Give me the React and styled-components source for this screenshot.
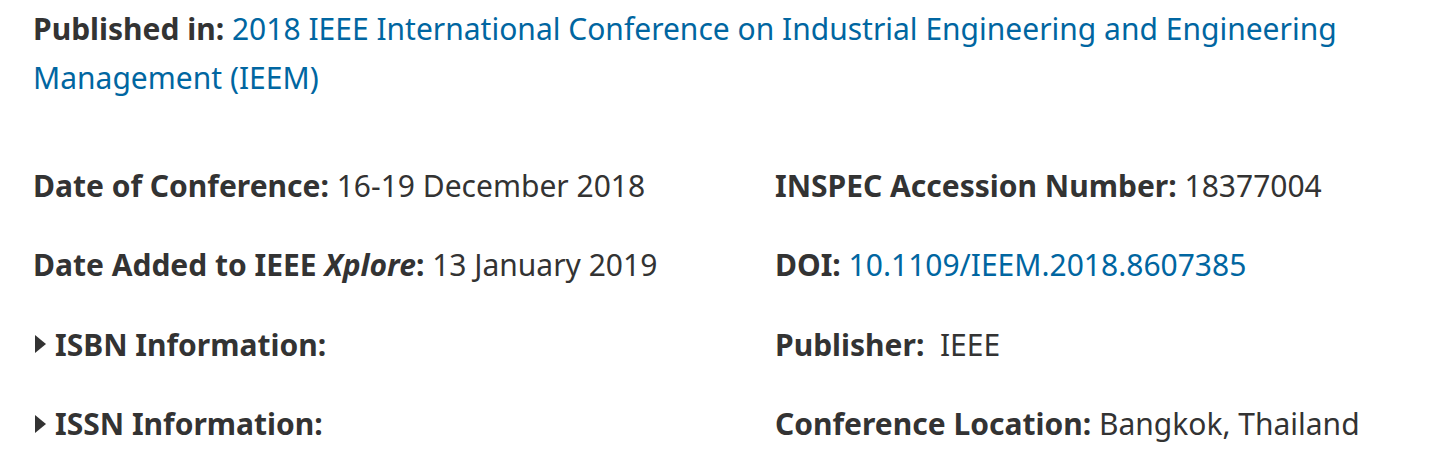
import React from "react";
import styled, { createGlobalStyle } from "styled-components";

const Global = createGlobalStyle`
  html, body { margin: 0; padding: 0; background: #fff; }
  body { font-family: "Noto Sans", "Open Sans", sans-serif; color: #333; }
`;

const Page = styled.div`
  padding: 4px 0 0 33px;
  font-size: 30px;
`;

const Published = styled.div`
  line-height: 49px;
  max-width: 1330px;
`;

const Label = styled.strong`
  font-weight: 700;
  color: #333;
`;

const Link = styled.a`
  color: #0066a1;
  text-decoration: none;
`;

const Grid = styled.div`
  margin-top: 59px;
  display: grid;
  grid-template-columns: 742px 1fr;
  row-gap: 30.4px;
`;

const Item = styled.div`
  line-height: 49px;
  white-space: nowrap;
  display: flex;
  align-items: center;
`;

const Caret = styled.span`
  display: inline-block;
  width: 0;
  height: 0;
  border-top: 9px solid transparent;
  border-bottom: 9px solid transparent;
  border-left: 11px solid #333;
  margin: 0 9px 0 2px;
`;

const Value = styled.span`
  white-space: pre;
`;

export default function App() {
  return (
    <>
      <Global />
      <Page>
        <Published>
          <Label>Published in:</Label>{" "}
          <Link href="#">
            2018 IEEE International Conference on Industrial Engineering and Engineering Management (IEEM)
          </Link>
        </Published>
        <Grid>
          <Item>
            <Label>Date of Conference:</Label>
            <Value> 16-19 December 2018</Value>
          </Item>
          <Item>
            <Label>INSPEC Accession Number:</Label>
            <Value> 18377004</Value>
          </Item>
          <Item>
            <Label>
              Date Added to IEEE <i>Xplore</i>:
            </Label>
            <Value> 13 January 2019</Value>
          </Item>
          <Item>
            <Label>DOI:</Label>
            <Value> </Value>
            <Link href="#">10.1109/IEEM.2018.8607385</Link>
          </Item>
          <Item>
            <Caret />
            <Label>ISBN Information:</Label>
          </Item>
          <Item>
            <Label>Publisher:</Label>
            <Value>  IEEE</Value>
          </Item>
          <Item>
            <Caret />
            <Label>ISSN Information:</Label>
          </Item>
          <Item>
            <Label>Conference Location:</Label>
            <Value> Bangkok, Thailand</Value>
          </Item>
        </Grid>
      </Page>
    </>
  );
}
